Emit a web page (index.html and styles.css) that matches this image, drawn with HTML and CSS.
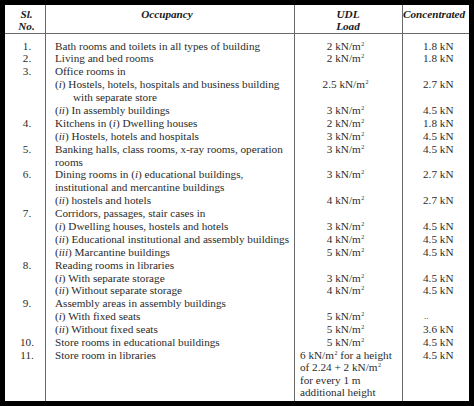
FILE: index.html
```html
<!DOCTYPE html>
<html>
<head>
<meta charset="utf-8">
<link rel="stylesheet" href="styles.css">
</head>
<body>
<div class="sheet">
  <div class="head">
    <div class="c1 hc">Sl.<br>No.</div>
    <div class="c2 hc">Occupancy</div>
    <div class="c3 hc">UDL<br>Load</div>
    <div class="c4 hc">Concentrated</div>
  </div>
  <div class="rows">
    <div class="col c1 num">
      <div class="ln">1.</div>
      <div class="ln">2.</div>
      <div class="ln">3.</div>
      <div class="ln">&nbsp;</div>
      <div class="ln">&nbsp;</div>
      <div class="ln">&nbsp;</div>
      <div class="ln">4.</div>
      <div class="ln">&nbsp;</div>
      <div class="ln">5.</div>
      <div class="ln">&nbsp;</div>
      <div class="ln">6.</div>
      <div class="ln">&nbsp;</div>
      <div class="ln">&nbsp;</div>
      <div class="ln">7.</div>
      <div class="ln">&nbsp;</div>
      <div class="ln">&nbsp;</div>
      <div class="ln">&nbsp;</div>
      <div class="ln">8.</div>
      <div class="ln">&nbsp;</div>
      <div class="ln">&nbsp;</div>
      <div class="ln">9.</div>
      <div class="ln">&nbsp;</div>
      <div class="ln">&nbsp;</div>
      <div class="ln">10.</div>
      <div class="ln">11.</div>
    </div>
    <div class="col c2 occ">
      <div class="ln">Bath rooms and toilets in all types of building</div>
      <div class="ln">Living and bed rooms</div>
      <div class="ln">Office rooms in</div>
      <div class="ln">(<i>i</i>) Hostels, hotels, hospitals and business building</div>
      <div class="ln indent">with separate store</div>
      <div class="ln">(<i>ii</i>) In assembly buildings</div>
      <div class="ln">Kitchens in (<i>i</i>) Dwelling houses</div>
      <div class="ln">(<i>ii</i>) Hostels, hotels and hospitals</div>
      <div class="ln">Banking halls, class rooms, x-ray rooms, operation</div>
      <div class="ln">rooms</div>
      <div class="ln">Dining rooms in (<i>i</i>) educational buildings,</div>
      <div class="ln">institutional and mercantine buildings</div>
      <div class="ln">(<i>ii</i>) hostels and hotels</div>
      <div class="ln">Corridors, passages, stair cases in</div>
      <div class="ln">(<i>i</i>) Dwelling houses, hostels and hotels</div>
      <div class="ln">(<i>ii</i>) Educational institutional and assembly buildings</div>
      <div class="ln">(<i>iii</i>) Marcantine buildings</div>
      <div class="ln">Reading rooms in libraries</div>
      <div class="ln">(<i>i</i>) With separate storage</div>
      <div class="ln">(<i>ii</i>) Without separate storage</div>
      <div class="ln">Assembly areas in assembly buildings</div>
      <div class="ln">(<i>i</i>) With fixed seats</div>
      <div class="ln">(<i>ii</i>) Without fixed seats</div>
      <div class="ln">Store rooms in educational buildings</div>
      <div class="ln">Store room in libraries</div>
    </div>
    <div class="col c3 udl">
      <div class="ln">2 kN/m<sup>2</sup></div>
      <div class="ln">2 kN/m<sup>2</sup></div>
      <div class="ln">&nbsp;</div>
      <div class="ln">2.5 kN/m<sup>2</sup></div>
      <div class="ln">&nbsp;</div>
      <div class="ln">3 kN/m<sup>2</sup></div>
      <div class="ln">2 kN/m<sup>2</sup></div>
      <div class="ln">3 kN/m<sup>2</sup></div>
      <div class="ln">3 kN/m<sup>2</sup></div>
      <div class="ln">&nbsp;</div>
      <div class="ln">3 kN/m<sup>2</sup></div>
      <div class="ln">&nbsp;</div>
      <div class="ln">4 kN/m<sup>2</sup></div>
      <div class="ln">&nbsp;</div>
      <div class="ln">3 kN/m<sup>2</sup></div>
      <div class="ln">4 kN/m<sup>2</sup></div>
      <div class="ln">5 kN/m<sup>2</sup></div>
      <div class="ln">&nbsp;</div>
      <div class="ln">3 kN/m<sup>2</sup></div>
      <div class="ln">4 kN/m<sup>2</sup></div>
      <div class="ln">&nbsp;</div>
      <div class="ln">5 kN/m<sup>2</sup></div>
      <div class="ln">5 kN/m<sup>2</sup></div>
      <div class="ln">5 kN/m<sup>2</sup></div>
      <div class="para">
        <div class="pl">6 kN/m<sup>2</sup> for a height</div>
        <div class="pl">of 2.24 + 2 kN/m<sup>2</sup></div>
        <div class="pl">for every 1 m</div>
        <div class="pl">additional height</div>
      </div>
    </div>
    <div class="col c4 conc">
      <div class="ln">1.8 kN</div>
      <div class="ln">1.8 kN</div>
      <div class="ln">&nbsp;</div>
      <div class="ln">2.7 kN</div>
      <div class="ln">&nbsp;</div>
      <div class="ln">4.5 kN</div>
      <div class="ln">1.8 kN</div>
      <div class="ln">4.5 kN</div>
      <div class="ln">4.5 kN</div>
      <div class="ln">&nbsp;</div>
      <div class="ln">2.7 kN</div>
      <div class="ln">&nbsp;</div>
      <div class="ln">2.7 kN</div>
      <div class="ln">&nbsp;</div>
      <div class="ln">4.5 kN</div>
      <div class="ln">4.5 kN</div>
      <div class="ln">4.5 kN</div>
      <div class="ln">&nbsp;</div>
      <div class="ln">4.5 kN</div>
      <div class="ln">4.5 kN</div>
      <div class="ln">&nbsp;</div>
      <div class="ln dots">..</div>
      <div class="ln">3.6 kN</div>
      <div class="ln">4.5 kN</div>
      <div class="ln">4.5 kN</div>
    </div>
  </div>
</div>
</body>
</html>
```

FILE: styles.css
```css
html, body {
  margin: 0;
  padding: 0;
  background: #000;
  width: 474px;
  height: 406px;
  overflow: hidden;
}

.sheet {
  margin: 5px 0 0 5px;
  width: 464px;
  height: 396px;
  background: #fff;
  display: flex;
  flex-direction: column;
  font-family: "Liberation Serif", "Times New Roman", serif;
  font-size: 11.2px;
  color: #2b2b2b;
}

.head {
  display: flex;
  height: 29px;
  box-sizing: border-box;
  border-bottom: 1px solid #6a6a6a;
}

.hc {
  box-sizing: border-box;
  padding-top: 2.5px;
  line-height: 12px;
  font-weight: bold;
  font-style: italic;
  text-align: center;
  color: #1a1a1a;
}

.c1 { width: 41px; flex: none; box-sizing: border-box; border-right: 1px solid #6a6a6a; }
.c2 { width: 249px; flex: none; box-sizing: border-box; border-right: 1px solid #6a6a6a; }
.c3 { width: 108px; flex: none; box-sizing: border-box; border-right: 1px solid #6a6a6a; }
.c4 { flex: 1; box-sizing: border-box; }

.head .c1 { padding-left: 3px; }
.head .c2 { padding-right: 6px; }
.head .c3 { padding-right: 1px; }
.head .c4 { padding-right: 4px; }

.rows {
  flex: 1;
  display: flex;
}

.col {
  padding-top: 5.5px;
}

.ln {
  height: 12.9px;
  line-height: 12.9px;
  white-space: nowrap;
}

sup {
  font-size: 6px;
  line-height: 0;
  vertical-align: 4px;
  margin-left: 0.5px;
}

.num { text-align: center; padding-left: 4px; }
.occ { padding-left: 9px; }
.occ .indent { padding-left: 18px; }
.udl { text-align: center; padding-right: 6px; }

.para {
  text-align: left;
  margin-left: 5px;
}

.pl {
  height: 12.4px;
  line-height: 12.4px;
  white-space: nowrap;
}

.conc { padding-left: 20px; }
.conc .dots { padding-left: 1px; font-size: 9px; }
```
